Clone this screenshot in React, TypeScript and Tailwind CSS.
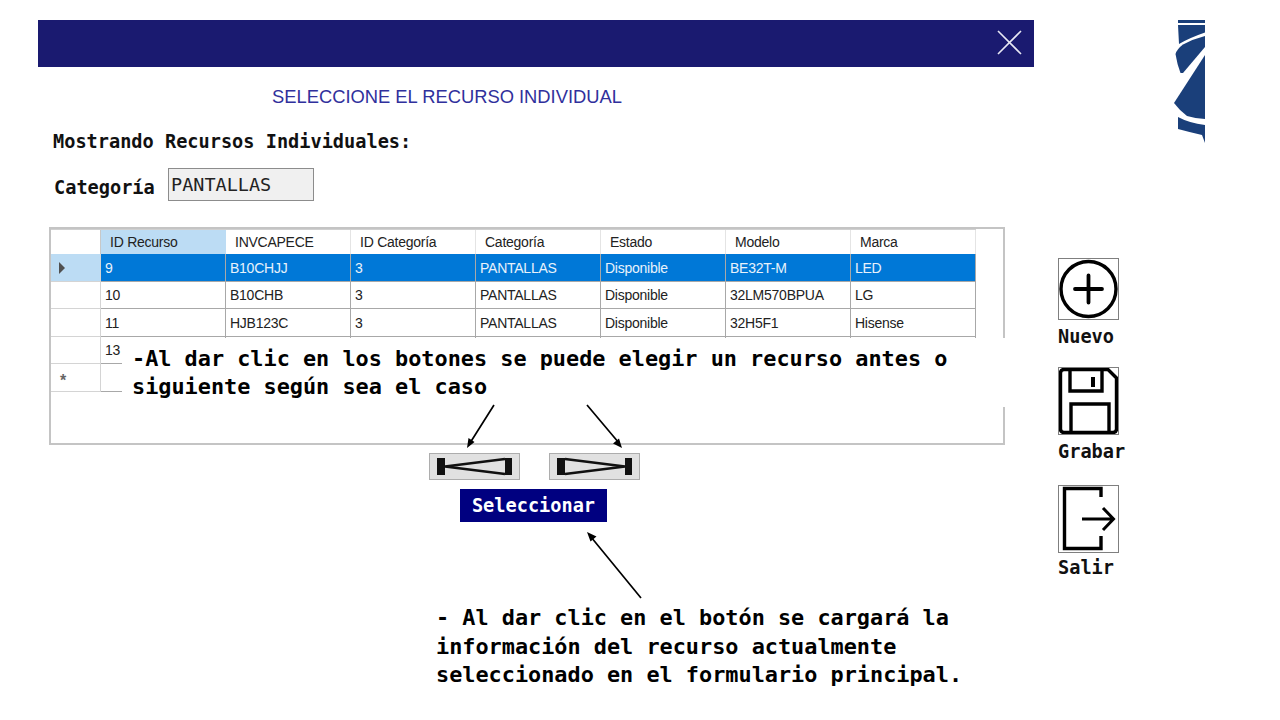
const mono = "font-['DejaVu_Sans_Mono','Liberation_Mono',monospace]";
const sans = "font-['Liberation_Sans',Arial,sans-serif]";

const columns = ["ID Recurso", "INVCAPECE", "ID Categoría", "Categoría", "Estado", "Modelo", "Marca"];
const rows = [
  { h: "h-[28px]", cells: ["9", "B10CHJJ", "3", "PANTALLAS", "Disponible", "BE32T-M", "LED"], selected: true },
  { h: "h-[27px]", cells: ["10", "B10CHB", "3", "PANTALLAS", "Disponible", "32LM570BPUA", "LG"] },
  { h: "h-[28px]", cells: ["11", "HJB123C", "3", "PANTALLAS", "Disponible", "32H5F1", "Hisense"] },
  { h: "h-[27px]", cells: ["13", "", "", "", "", "", ""] },
  { h: "h-[28px]", cells: ["", "", "", "", "", "", ""], star: true },
];

function DataGrid() {
  return (
    <div className={`${sans} relative ml-[11px] mt-[26px] h-[218px] w-[956px] border-2 border-[#c4c4c4] text-[14px] tracking-[-0.25px] text-[#222]`}>
      <div className="flex h-[25px] w-[925px] border-t border-[#d0d0d0]">
        <div className="h-full w-[50px] border-r border-[#c8c8c8]" />
        {columns.map((c, i) => (
          <div
            key={c}
            className={`flex h-full w-[125px] items-center pl-[9px] ${i === 0 ? "bg-[#bcdcf4]" : "border-r border-[#e4e4e4]"}`}
          >
            {c}
          </div>
        ))}
      </div>
      {rows.map((r, idx) => (
        <div key={idx} className={`flex w-[925px] ${r.h}`}>
          <div className={`flex h-full w-[50px] items-center border-b border-r border-[#d4d4d4] pl-[7px] ${r.selected ? "bg-[#bcdcf4]" : ""}`}>
            {r.selected && (
              <svg width="8" height="12" viewBox="0 0 8 12">
                <path d="M1 0 L7 6 L1 12 Z" fill="#505050" />
              </svg>
            )}
            {r.star && <span className="ml-[2px] mt-[6px] text-[16px] font-bold leading-none text-[#666]">*</span>}
          </div>
          {r.cells.map((c, i) => (
            <div
              key={i}
              className={`flex h-full w-[125px] items-center border-b border-r border-[#a8a8a8] pl-[4px] pt-[1px] ${
                r.selected ? "bg-[#0078d7] text-[#e8f2fb]" : ""
              }`}
            >
              {c}
            </div>
          ))}
        </div>
      ))}
      <div className={`${mono} absolute left-[71px] top-[109px] z-10 h-[69px] w-[885px] bg-white pl-[10px] pt-[7px] text-[21.85px] font-bold leading-[28px] tracking-normal text-black`}>
        <p>-Al dar clic en los botones se puede elegir un recurso antes o</p>
        <p>siguiente según sea el caso</p>
      </div>
    </div>
  );
}

function Tool({ label, h, mt, labelMt, children }: { label: string; h: string; mt: string; labelMt: string; children: React.ReactNode }) {
  return (
    <div className={`flex flex-col ${mt}`}>
      <div className={`w-[61px] ${h} border border-[#7f7f7f]`}>{children}</div>
      <span className={`${mono} ${labelMt} text-[18.6px] font-bold leading-[22px] text-[#111]`}>{label}</span>
    </div>
  );
}

export default function App() {
  return (
    <div className="relative flex h-[720px] w-[1280px] overflow-hidden bg-white">
      <div className="ml-[38px] mt-[20px] flex w-[996px] flex-col">
        <div className="flex h-[47px] items-center justify-end bg-[#1a1a70] pr-[12px]">
          <svg className="-mt-[2px]" width="25" height="25" viewBox="0 0 25 25">
            <path d="M1 1 L24 24 M24 1 L1 24" stroke="#e8e8f4" strokeWidth="1.6" fill="none" />
          </svg>
        </div>
        <h1 className={`${sans} ml-[234px] mt-[18px] text-[18.35px] font-normal leading-[24px] text-[#30309c]`}>
          SELECCIONE EL RECURSO INDIVIDUAL
        </h1>
        <p className={`${mono} ml-[15px] mt-[21px] text-[18.6px] font-bold leading-[24px] text-[#111]`}>
          Mostrando Recursos Individuales:
        </p>
        <div className="ml-[16px] mt-[14px] flex items-center">
          <span className={`${mono} mt-[6px] w-[114px] text-[18.6px] font-bold leading-[24px] text-[#111]`}>Categoría</span>
          <div className={`${mono} h-[33px] w-[146px] border border-[#8c8c8c] bg-[#f0f0f0] pl-[2px] text-[18.5px] leading-[31px] text-[#222]`}>
            PANTALLAS
          </div>
        </div>
        <DataGrid />
        <div className="mt-[8px] flex">
          <button className="ml-[391px] flex h-[27px] w-[91px] items-center justify-center border border-[#adadad] bg-[#e1e1e1]">
            <svg width="89" height="25" viewBox="0 0 89 25">
              <path d="M7 4 h8 v17 h-8 Z M75 4 h7 v17 h-7 Z" fill="#111" />
              <path d="M15 12.5 L75 5 M15 12.5 L75 20" stroke="#111" strokeWidth="2.4" fill="none" />
            </svg>
          </button>
          <button className="ml-[29px] flex h-[27px] w-[91px] items-center justify-center border border-[#adadad] bg-[#e1e1e1]">
            <svg width="89" height="25" viewBox="0 0 89 25">
              <path d="M7 4 h8 v17 h-8 Z M75 4 h7 v17 h-7 Z" fill="#111" />
              <path d="M15 5 L75 12.5 M15 20 L75 12.5" stroke="#111" strokeWidth="2.4" fill="none" />
            </svg>
          </button>
        </div>
        <button className={`${mono} ml-[422px] mt-[9px] h-[33px] w-[147px] bg-[#000080] pt-[1px] text-[18.6px] font-bold text-white`}>
          Seleccionar
        </button>
        <div className={`${mono} ml-[398px] mt-[82px] text-[21.85px] font-bold leading-[28.5px] text-black`}>
          <p>- Al dar clic en el botón se cargará la</p>
          <p>información del recurso actualmente</p>
          <p>seleccionado en el formulario principal.</p>
        </div>
      </div>

      <div className="ml-[24px] flex flex-col">
        <svg className="ml-[116px] mt-[20px] shrink-0" width="31" height="123" viewBox="-3 0 31 123">
          <path d="M1 0 H28 V3 H1 Z" fill="#1a3f7a" />
          <path d="M1 5 H28 V12.5 Q12 18 2 24 Z" fill="#1a3f7a" />
          <path d="M28 16 V27 L6 53 H3.5 Q0 44 -1.5 34 Q0 29 6 24.5 Q16 19 28 16 Z" fill="#1a3f7a" />
          <path d="M28 35 V99 Q18 98.5 10 96 Q3 91 -3 83 Z" fill="#1a3f7a" />
          <path d="M1 97 Q12 103 28 105 V123 L25 115 Q12 112 1 109 Z" fill="#1a3f7a" />
        </svg>
        <Tool label="Nuevo" h="h-[62px]" mt="mt-[115px]" labelMt="mt-[6px]">
          <svg width="59" height="60" viewBox="0 0 59 60">
            <circle cx="29.5" cy="30" r="27.5" stroke="#000" strokeWidth="3.4" fill="none" />
            <path d="M16 30 H43 M29.5 16.5 V43.5" stroke="#000" strokeWidth="3.8" strokeLinecap="round" fill="none" />
          </svg>
        </Tool>
        <Tool label="Grabar" h="h-[68px]" mt="mt-[19px]" labelMt="mt-[6px]">
          <svg width="59" height="66" viewBox="0 0 59 66">
            <path d="M5 1.5 H49 L57.5 10 V61 Q57.5 64.5 54 64.5 H5 Q1.5 64.5 1.5 61 V5 Q1.5 1.5 5 1.5 Z" stroke="#000" strokeWidth="3.4" fill="none" />
            <path d="M11 2 V23 H43 V2 M12 64 V36 H50 V64" stroke="#000" strokeWidth="3.4" fill="none" />
            <path d="M32 9 H36 V19 H32 Z" fill="#000" />
          </svg>
        </Tool>
        <Tool label="Salir" h="h-[68px]" mt="mt-[22px]" labelMt="mt-[4px]">
          <svg width="59" height="66" viewBox="0 0 59 66">
            <path d="M42 11 V2.5 H5.5 V62.5 H42 V50" stroke="#000" strokeWidth="3.4" fill="none" />
            <path d="M23 33 H54 M44 22 L54.5 33 L44 44" stroke="#000" strokeWidth="3" fill="none" />
          </svg>
        </Tool>
      </div>

      <svg className="pointer-events-none absolute left-0 top-0 z-20" width="1280" height="720" viewBox="0 0 1280 720">
        <path d="M494 405 L470 443 M587 405 L619 443 M641 598 L591 537" stroke="#000" strokeWidth="1.7" fill="none" />
        <path d="M467 448 L468.5 438 L474.5 442 Z M622 448 L613 443.5 L619 438.5 Z M587 532 L596.5 536.5 L590.5 541.5 Z" fill="#000" />
      </svg>
    </div>
  );
}
